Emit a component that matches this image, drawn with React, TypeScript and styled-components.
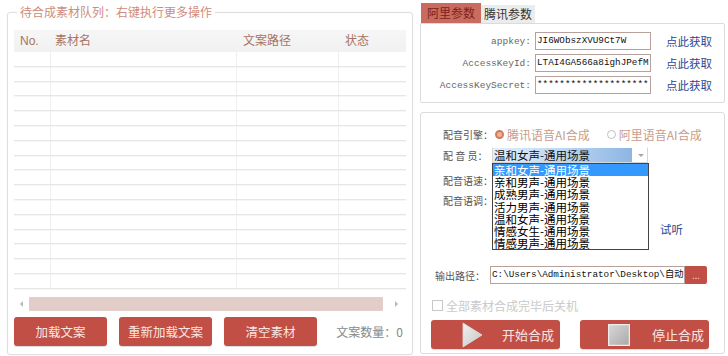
import React from "react";
import styled, { createGlobalStyle } from "styled-components";

const GlobalStyle = createGlobalStyle`
  html, body {
    margin: 0;
    padding: 0;
    background: #fff;
  }
  body {
    font-family: "Noto Sans CJK SC", "Liberation Sans", sans-serif;
    font-size: 12px;
    color: #555;
  }
`;

const RED = "#c24f45";
const MONO = `"Liberation Mono", "Noto Sans CJK SC", monospace`;

const Page = styled.div`
  width: 728px;
  height: 356px;
  box-sizing: border-box;
  padding-left: 7px;
  display: flex;
  gap: 7px;
  overflow: hidden;
`;

/* ---------- left: queue ---------- */

const QueueGroup = styled.fieldset`
  margin: 4px 0 0;
  padding: 0 6px;
  width: 406px;
  height: 351px;
  box-sizing: border-box;
  min-width: 0;
  border: 1px solid #dedede;
  border-radius: 3px;
  box-shadow: 0 0 2px rgba(0, 0, 0, 0.05);
  display: flex;
  flex-direction: column;
`;

const QueueLegend = styled.legend`
  margin-left: 3px;
  padding: 0 3px;
  font-size: 12px;
  line-height: 16px;
  color: #cf8b7c;
`;

const Table = styled.div`
  margin-top: 10px;
  display: flex;
  flex-direction: column;
`;

const GridRow = styled.div<{ $height: number }>`
  display: grid;
  grid-template-columns: 37px 186px 102px 1fr;
  height: ${(p) => p.$height}px;
  box-sizing: border-box;
`;

const HeaderRow = styled(GridRow)`
  background: linear-gradient(#f6f6f6, #f1f1f1);
`;

const HeaderCell = styled.div<{ $pad: number }>`
  padding-left: ${(p) => p.$pad}px;
  line-height: 22px;
  font-size: 12px;
  color: #a8735f;
  font-family: "Liberation Sans", "Noto Sans CJK SC", sans-serif;
`;

const BodyRow = styled(GridRow)`
  border-bottom: 1px solid #e6e6e6;
  box-shadow: 0 1px 0 #f6f6f6;
`;

const BodyCell = styled.div`
  border-right: 1px solid #efefef;
  &:last-child {
    border-right: none;
  }
`;

const HScroll = styled.div`
  margin-top: 8px;
  height: 14px;
  display: flex;
  align-items: center;
`;

const Arrow = styled.span<{ $dir: "left" | "right" }>`
  width: 0;
  height: 0;
  border-top: 3px solid transparent;
  border-bottom: 3px solid transparent;
  ${(p) =>
    p.$dir === "left"
      ? "border-right: 3px solid #b8b8b8; margin: 0 6px 0 6px;"
      : "border-left: 3px solid #b8b8b8; margin: 0 8px 0 12px;"}
`;

const Thumb = styled.div`
  flex: 1;
  height: 14px;
  background: #e3cdc9;
  border-radius: 1px;
`;

const ButtonRow = styled.div`
  margin-top: 6px;
  display: flex;
  align-items: center;
  gap: 12px;
`;

const RedButton = styled.button<{ $width: number }>`
  width: ${(p) => p.$width}px;
  height: 29px;
  padding: 0;
  border: none;
  border-radius: 3px;
  background: ${RED};
  color: #fae6e2;
  font-family: "Noto Sans CJK SC", sans-serif;
  font-size: 12.5px;
  display: flex;
  align-items: center;
  justify-content: center;
  box-shadow: 0 1px 1px rgba(0, 0, 0, 0.15);
`;

const CountText = styled.span`
  margin-left: auto;
  margin-right: 3px;
  color: #888;
  font-size: 12px;
`;

/* ---------- right column ---------- */

const RightColumn = styled.div`
  width: 305px;
  padding-top: 3px;
  display: flex;
  flex-direction: column;
`;

const TabBar = styled.div`
  display: flex;
  align-items: flex-end;
  padding-left: 1px;
  height: 20px;
`;

const Tab = styled.div<{ $active?: boolean }>`
  height: ${(p) => (p.$active ? 20 : 18)}px;
  padding: 0 ${(p) => (p.$active ? 6 : 3)}px;
  line-height: ${(p) => (p.$active ? 20 : 18)}px;
  font-size: 12px;
  background: ${(p) => (p.$active ? "#c96b5f" : "#ececec")};
  color: ${(p) => (p.$active ? "#7a241c" : "#333")};
`;

const TabPanel = styled.div`
  height: 80px;
  box-sizing: border-box;
  border: 1px solid #dcdcdc;
  border-radius: 0 2px 2px 2px;
  padding-top: 8px;
  display: flex;
  flex-direction: column;
  gap: 4px;
`;

const KeyRow = styled.div`
  display: grid;
  grid-template-columns: 110px 116px auto;
  column-gap: 4px;
  align-items: center;
  height: 18px;
`;

const KeyLabel = styled.span`
  text-align: right;
  font-family: ${MONO};
  font-size: 9.5px;
  color: #666;
`;

const TextBox = styled.div<{ $width?: number }>`
  ${(p) => (p.$width ? `width: ${p.$width}px;` : "")}
  height: 18px;
  box-sizing: border-box;
  border: 1px solid #b8a09b;
  background: #fff;
  padding: 0 1px;
  font-family: ${MONO};
  font-size: 9.3px;
  line-height: 16px;
  color: #111;
  white-space: nowrap;
  overflow: hidden;
`;

const BlueLink = styled.span<{ $indent?: number }>`
  margin-left: ${(p) => p.$indent ?? 11}px;
  color: #2a4794;
  font-size: 11.5px;
`;

const VoiceGroup = styled.div`
  margin-top: 9px;
  height: 242px;
  box-sizing: border-box;
  border: 1px solid #dcdcdc;
  border-radius: 3px;
  display: flex;
  flex-direction: column;
`;

const FormRow = styled.div<{ $top: number; $indent: number }>`
  margin-top: ${(p) => p.$top}px;
  padding-left: ${(p) => p.$indent}px;
  height: 18px;
  display: flex;
  align-items: center;
  position: relative;
`;

const FieldLabel = styled.span`
  width: 49px;
  flex-shrink: 0;
  font-size: 10px;
  color: #555;
  white-space: pre;
`;

const Radio = styled.span<{ $checked?: boolean }>`
  width: 9px;
  height: 9px;
  border-radius: 50%;
  box-sizing: border-box;
  margin: 0 3px 0 3px;
  border: ${(p) => (p.$checked ? "2.5px solid #cf7b5a" : "1px solid #c0c0c0")};
  background: ${(p) => (p.$checked ? "#f1b095" : "#fff")};
`;

const RadioText = styled.span<{ $gap?: number }>`
  color: #c89c8d;
  font-size: 12px;
  margin-right: ${(p) => p.$gap ?? 0}px;
`;

const SelectBox = styled.div`
  margin-left: 0;
  width: 156px;
  height: 16px;
  box-sizing: border-box;
  border: 1px solid #d6d6d6;
  border-top-color: transparent;
  display: flex;
  align-items: center;
  position: relative;
`;

const SelectValue = styled.span`
  width: 138px;
  height: 14px;
  line-height: 14px;
  padding-left: 1px;
  font-size: 11.5px;
  color: #111;
  background: linear-gradient(to right, #e4effa 0%, #bcd6f1 50%, #8db6e3 100%);
`;

const Caret = styled.span`
  margin-left: 6px;
  width: 0;
  height: 0;
  border-left: 3px solid transparent;
  border-right: 3px solid transparent;
  border-top: 3px solid #a8a8a8;
`;

const DropList = styled.ul`
  position: absolute;
  top: 15px;
  left: -1px;
  width: 157px;
  height: 87px;
  margin: 0;
  padding: 0;
  list-style: none;
  box-sizing: border-box;
  border: 1px solid #444;
  background: #fff;
  overflow: hidden;
  z-index: 2;
`;

const DropItem = styled.li<{ $active?: boolean }>`
  height: 12.2px;
  line-height: 12.2px;
  padding-left: 1px;
  font-size: 11.5px;
  color: ${(p) => (p.$active ? "#fff" : "#000")};
  background: ${(p) => (p.$active ? "#3399ff" : "transparent")};
  white-space: nowrap;
`;

const PathBox = styled.div`
  margin-left: 6px;
  display: flex;
  height: 18px;
`;

const BrowseButton = styled.span`
  width: 22px;
  height: 18px;
  background: ${RED};
  color: #f4d8d2;
  font-size: 9px;
  line-height: 20px;
  text-align: center;
  border-radius: 0 2px 2px 0;
`;

const CheckBox = styled.span`
  width: 11px;
  height: 11px;
  box-sizing: border-box;
  border: 1px solid #c8c8c8;
  margin-right: 3px;
`;

const CheckText = styled.span`
  font-size: 12px;
  color: #cacaca;
`;

const ActionRow = styled.div`
  margin-top: 6px;
  padding-left: 10px;
  display: flex;
  gap: 20px;
`;

const ActionButton = styled.button<{ $iconPad: number; $textPad: number }>`
  width: 129px;
  height: 29px;
  padding: 0 0 0 ${(p) => p.$iconPad}px;
  border: none;
  border-radius: 3px;
  background: ${RED};
  color: #fae6e2;
  font-family: "Noto Sans CJK SC", sans-serif;
  font-size: 13px;
  display: flex;
  align-items: center;
  gap: ${(p) => p.$textPad}px;
  box-shadow: 0 1px 1px rgba(0, 0, 0, 0.15);
`;

const PlayIcon = () => (
  <svg width="21" height="26" viewBox="0 0 21 26">
    <defs>
      <linearGradient id="playG" x1="0" y1="0" x2="1" y2="1">
        <stop offset="0" stopColor="#f2f2f2" />
        <stop offset="1" stopColor="#c4c4c4" />
      </linearGradient>
    </defs>
    <polygon points="1,1 20,13 1,25" fill="url(#playG)" stroke="#dedede" strokeWidth="0.8" />
  </svg>
);

const StopIcon = () => (
  <svg width="22" height="22" viewBox="0 0 22 22">
    <defs>
      <linearGradient id="stopG" x1="0" y1="0" x2="1" y2="1">
        <stop offset="0" stopColor="#d8d8d8" />
        <stop offset="1" stopColor="#a9a9a9" />
      </linearGradient>
    </defs>
    <rect x="0.5" y="0.5" width="21" height="21" fill="url(#stopG)" stroke="#ececec" strokeWidth="1.5" />
  </svg>
);

const COLUMNS = [
  { title: "No.", pad: 6 },
  { title: "素材名", pad: 4 },
  { title: "文案路径", pad: 6 },
  { title: "状态", pad: 6 },
];

const KEYS = [
  { label: "appkey:", value: "JI6WObszXVU9Ct7W" },
  { label: "AccessKeyId:", value: "LTAI4GA566a8ighJPefM'" },
  { label: "AccessKeySecret:", value: "********************" },
];

const VOICES = [
  "亲和女声-通用场景",
  "亲和男声-通用场景",
  "成熟男声-通用场景",
  "活力男声-通用场景",
  "温和女声-通用场景",
  "情感女生-通用场景",
  "情感男声-通用场景",
];

export default function App() {
  return (
    <>
      <GlobalStyle />
      <Page>
        <QueueGroup>
          <QueueLegend>待合成素材队列：右键执行更多操作</QueueLegend>
          <Table>
            <HeaderRow $height={22}>
              {COLUMNS.map((c) => (
                <HeaderCell key={c.title} $pad={c.pad}>
                  {c.title}
                </HeaderCell>
              ))}
            </HeaderRow>
            {Array.from({ length: 16 }).map((_, i) => (
              <BodyRow key={i} $height={14.8}>
                {COLUMNS.map((c) => (
                  <BodyCell key={c.title} />
                ))}
              </BodyRow>
            ))}
          </Table>
          <HScroll>
            <Arrow $dir="left" />
            <Thumb />
            <Arrow $dir="right" />
          </HScroll>
          <ButtonRow>
            <RedButton $width={93}>加载文案</RedButton>
            <RedButton $width={93}>重新加载文案</RedButton>
            <RedButton $width={93}>清空素材</RedButton>
            <CountText>文案数量：0</CountText>
          </ButtonRow>
        </QueueGroup>

        <RightColumn>
          <TabBar>
            <Tab $active>阿里参数</Tab>
            <Tab>腾讯参数</Tab>
          </TabBar>
          <TabPanel>
            {KEYS.map((k) => (
              <KeyRow key={k.label}>
                <KeyLabel>{k.label}</KeyLabel>
                <TextBox>{k.value}</TextBox>
                <BlueLink>点此获取</BlueLink>
              </KeyRow>
            ))}
          </TabPanel>

          <VoiceGroup>
            <FormRow $top={12} $indent={22}>
              <FieldLabel>配音引擎：</FieldLabel>
              <Radio $checked />
              <RadioText $gap={14}>腾讯语音AI合成</RadioText>
              <Radio />
              <RadioText>阿里语音AI合成</RadioText>
            </FormRow>
            <FormRow $top={3} $indent={22}>
              <FieldLabel>{"配 音 员："}</FieldLabel>
              <SelectBox>
                <SelectValue>温和女声-通用场景</SelectValue>
                <Caret />
                <DropList>
                  {VOICES.map((v, i) => (
                    <DropItem key={i} $active={i === 0}>
                      {v}
                    </DropItem>
                  ))}
                </DropList>
              </SelectBox>
            </FormRow>
            <FormRow $top={7} $indent={22}>
              <FieldLabel>配音语速：</FieldLabel>
            </FormRow>
            <FormRow $top={2} $indent={22}>
              <FieldLabel>配音语调：</FieldLabel>
            </FormRow>
            <FormRow $top={11} $indent={22}>
              <BlueLink $indent={217}>试听</BlueLink>
            </FormRow>
            <FormRow $top={28} $indent={14}>
              <FieldLabel>输出路径：</FieldLabel>
              <PathBox>
                <TextBox $width={195}>C:\Users\Administrator\Desktop\自动</TextBox>
                <BrowseButton>...</BrowseButton>
              </PathBox>
            </FormRow>
            <FormRow $top={12} $indent={11}>
              <CheckBox />
              <CheckText>全部素材合成完毕后关机</CheckText>
            </FormRow>
            <ActionRow>
              <ActionButton $iconPad={31} $textPad={19}>
                <PlayIcon />
                开始合成
              </ActionButton>
              <ActionButton $iconPad={28} $textPad={22}>
                <StopIcon />
                停止合成
              </ActionButton>
            </ActionRow>
          </VoiceGroup>
        </RightColumn>
      </Page>
    </>
  );
}
